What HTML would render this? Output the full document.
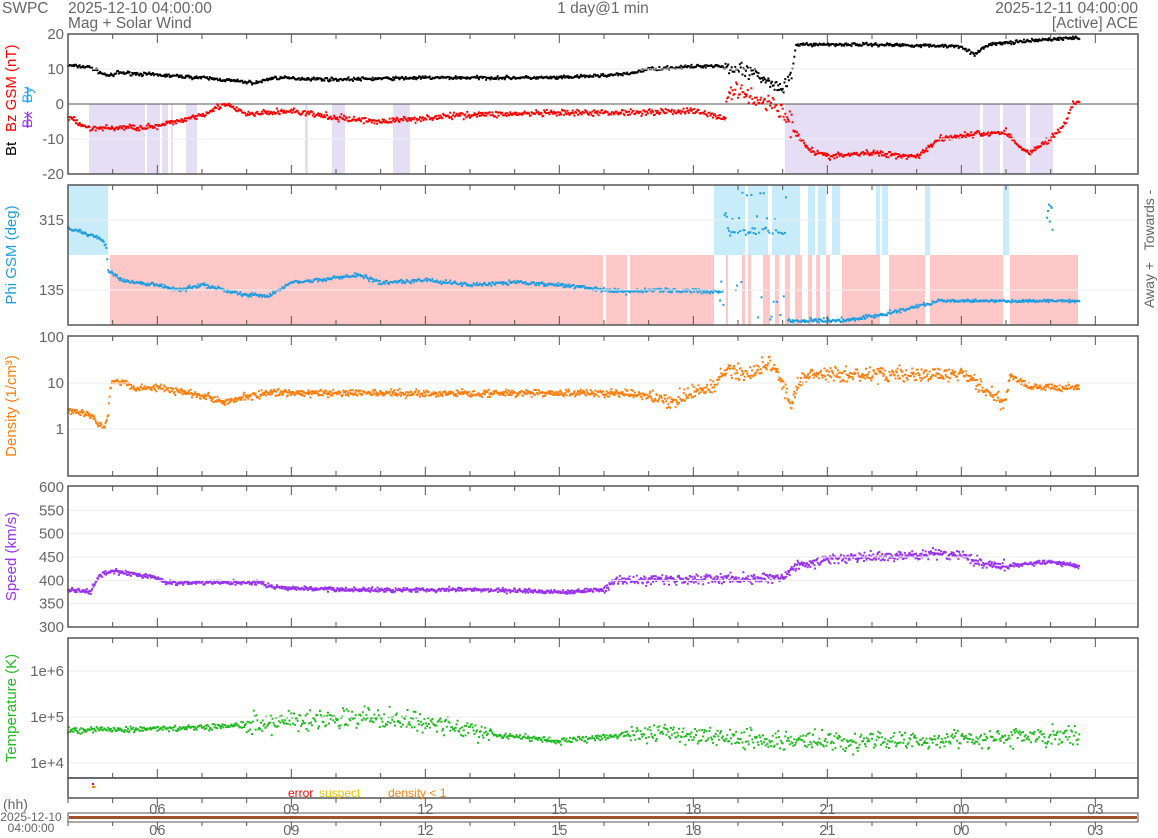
<!DOCTYPE html>
<html><head><meta charset="utf-8"><style>
html,body{margin:0;padding:0;background:#fff;width:1158px;height:838px;overflow:hidden}
svg{display:block;font-family:"Liberation Sans",sans-serif}
</style></head><body>
<svg id="s" width="1158" height="838" xmlns="http://www.w3.org/2000/svg">
<g font-size="15.5" fill="#666">
<text x="2" y="13">SWPC</text>
<text x="68" y="13">2025-12-10 04:00:00</text>
<text x="68" y="28">Mag + Solar Wind</text>
<text x="603" y="13" text-anchor="middle">1 day@1 min</text>
<text x="1138" y="13" text-anchor="end">2025-12-11 04:00:00</text>
<text x="1138" y="28" text-anchor="end">[Active] ACE</text>
</g>
<g id="bg"></g><g id="dat"></g><g id="ax"></g>
</svg>
<script>
var NS="http://www.w3.org/2000/svg",bg=document.getElementById('bg'),dat=document.getElementById('dat'),ax=document.getElementById('ax');
function el(p,t,a,txt){var e=document.createElementNS(NS,t);for(var k in a)e.setAttribute(k,a[k]);if(txt!=null)e.textContent=txt;p.appendChild(e);return e;}
var seed=7;function rnd(){seed=(seed*16807)%2147483647;return seed/2147483647;}
function gn(){return (rnd()+rnd()+rnd()-1.5)/1.5;}
var X0=68,X1=1138,PH=(1095-157)/21;
function hx(h){return X0+h*PH;}
function interp(k,h){for(var i=1;i<k.length;i++){if(h<=k[i][0]){var a=k[i-1],b=k[i];var t=(h-a[0])/(b[0]-a[0]);return a[1]+(b[1]-a[1])*t;}}return k[k.length-1][1];}
var HEND=22.65;
function rects(y0,y1,ints,col){ints.forEach(function(r){el(bg,'rect',{x:r[0],y:y0,width:r[1]-r[0],height:y1-y0,fill:col});});}
function pts(col,fn,step){var d='';for(var h=0;h<=HEND;h+=step){var y=fn(h);if(y==null)continue;var x=hx(h);d+='M'+(x-1).toFixed(1)+' '+(y-1).toFixed(1)+'h2v2h-2z';}el(dat,'path',{d:d,fill:col});}
function panel(y0,y1,grid,labels,ylab,ycol){
 grid.forEach(function(g){el(ax,'line',{x1:X0,x2:X1,y1:g,y2:g,stroke:'#eee'});});
 el(ax,'rect',{x:X0,y:y0,width:X1-X0,height:y1-y0,fill:'none',stroke:'#555','stroke-width':1.5});
 for(var h=0;h<=23;h++){var x=hx(h);var hr=(h+4)%24;var big=hr%3==0;var L=big?9:5;el(ax,'line',{x1:x,x2:x,y1:y0,y2:y0+L,stroke:'#555'});el(ax,'line',{x1:x,x2:x,y1:y1,y2:y1-L,stroke:'#555'});}
 labels.forEach(function(l){el(ax,'text',{x:64,y:l[1]+5,'text-anchor':'end','font-size':15,fill:'#666'},l[0]);});
 if(ylab){var cy=(y0+y1)/2;el(ax,'text',{x:16,y:cy,'text-anchor':'middle',transform:'rotate(-90 16 '+cy+')','font-size':15,fill:ycol},ylab);}
}
// Panel 1 Mag
rects(104,174,[[89,145],[147,160],[162,168],[171,173],[186,197],[305,308],[332,345],[393,410],[785,980],[983,1000],[1003,1026],[1030,1053]],'#e6def5');
el(bg,'line',{x1:X0,x2:X1,y1:104,y2:104,stroke:'#555'});
function my(v){return 104-v*3.5;}
var bt=[[0,11],[0.5,10.5],[0.8,8.5],[1,8],[1.1,9],[3,7.5],[4.2,6],[4.6,7.5],[6,7],[8,7.5],[11,7.5],[12.5,8.5],[13,10],[14.5,11],[14.7,10.5],[14.8,10],[15.5,8],[16,4],[16.2,8],[16.3,17],[18,17],[20,16.5],[20.3,14],[20.6,17],[22,18.5],[22.65,19]];
pts('#000',function(h){return my(interp(bt,h)+gn()*0.7+(h>14.7&&h<16.2?gn()*3:0));},0.02);
var bz=[[0,-4],[0.5,-7],[2,-6.5],[3,-3],[3.5,0],[4,-3],[5,-2],[6,-4],[7,-5],[9,-3],[12,-2.5],[14,-2],[14.7,-4],[14.8,4],[15.5,1],[16,-2],[16.3,-8],[16.6,-13],[17,-15],[18,-14],[19,-15],[19.5,-10],[20,-9],[21,-8],[21.2,-11],[21.5,-14],[22,-10],[22.3,-6],[22.5,0],[22.65,0.5]];
pts('#f00',function(h){return my(interp(bz,h)+gn()*1.3+(h>14.7&&h<16.3?gn()*4:0));},0.02);
panel(34,174,[69,139],[['20',34],['10',69],['0',104],['-10',139],['-20',174]]);
el(ax,'text',{x:16,y:156,transform:'rotate(-90 16 156)','font-size':15,fill:'#000'},'Bt');
el(ax,'text',{x:16,y:132,transform:'rotate(-90 16 132)','font-size':15,fill:'#f00'},'Bz GSM (nT)');
el(ax,'text',{x:32,y:128,transform:'rotate(-90 32 128)','font-size':14,fill:'#9933ff','text-decoration':'line-through'},'Bx');
el(ax,'text',{x:32,y:103,transform:'rotate(-90 32 103)','font-size':14,fill:'#22aaee','text-decoration':'line-through'},'By');
// Panel 2 Phi
rects(185,255,[[68,108],[714,745],[748,768],[772,800],[808,815],[818,826],[832,840],[876,880],[882,888],[925,930],[1003,1009]],'#c8ecfa');
rects(255,325,[[110,603],[606,627],[630,714],[726,728],[742,745],[748,751],[763,770],[775,779],[785,790],[795,802],[808,812],[816,820],[826,830],[842,880],[889,925],[930,1003],[1010,1078]],'#ffc8c8');
var ph=[[0,228],[0.7,238],[0.85,245],[0.9,270],[1.2,280],[2,285],[2.5,290],[3,285],[4,295],[4.5,296],[5,283],[6,278],[6.5,275],[7,283],[8,280],[9,285],[10,282],[11,285],[12.5,292],[13,290],[16,293],[18,296],[19,298],[20,298]];
pts('#1e9ee0',function(h){if(h>14.6&&h<16.1)return null;if(h>=16.1&&h<19.6)return interp([[16.1,321],[17.5,320],[18.5,312],[19.6,300]],h)+gn()*3;if(h>=19.6)return 301+gn()*2;return interp(ph,h)+gn()*3;},0.02);
pts('#1e9ee0',function(h){if(h<14.6||h>16.1)return null;var r=rnd();if(r<0.45)return 232+gn()*5;if(r<0.6)return 215+gn()*8;if(r<0.75)return 190+rnd()*10;return 280+rnd()*40;},0.025);
pts('#1e9ee0',function(h){if(h<21.9||h>22.05)return null;return 200+rnd()*40;},0.02);
panel(185,325,[220,290],[['315',220],['135',290]],'Phi GSM (deg)','#1e9ee0');
el(ax,'text',{x:1154,y:220,transform:'rotate(-90 1154 220)','text-anchor':'middle','font-size':14,fill:'#666'},'Towards -');
el(ax,'text',{x:1154,y:285,transform:'rotate(-90 1154 285)','text-anchor':'middle','font-size':14,fill:'#666'},'Away +');
// Panel 3 Density
function dy(n){return 429-46*Math.log10(n);}
var dn=[[0,2.5],[0.5,2],[0.8,1],[0.9,2],[1,12],[1.5,8],[2,8],[3.5,4],[4.5,6],[6,6],[10,6],[12.5,6],[13.5,4],[14,6],[14.5,8],[14.7,20],[15.3,15],[15.7,30],[16,8],[16.2,3],[16.5,15],[18,15],[20,15],[20.7,5],[21,4],[21.1,15],[21.5,8],[22.65,8]];
pts('#ff7f0e',function(h){var n=interp(dn,h)*Math.pow(10,gn()*((h>13&&h<21)?0.25:0.12));return dy(n);},0.015);
panel(336,476,[383,429],[['100',337],['10',383],['1',429]],'Density (1/cm³)','#ff7f0e');
// Panel 4 Speed
function sy(v){return 487+(600-v)*140/300;}
var sp=[[0,380],[0.5,375],[0.7,410],[1,420],[2,405],[2.2,395],[4.3,395],[4.6,385],[6,380],[9,380],[11,375],[12,380],[12.2,400],[16,405],[16.3,430],[17,445],[19,455],[20,455],[20.5,435],[21,430],[22,440],[22.65,430]];
pts('#9933ee',function(h){return sy(interp(sp,h)+gn()*((h>12&&h<21)?16:7));},0.015);
var sg=[];for(var v=350;v<600;v+=50)sg.push(sy(v));
panel(486,627,sg,[['600',487],['550',sy(550)],['500',sy(500)],['450',sy(450)],['400',sy(400)],['350',sy(350)],['300',627]],'Speed (km/s)','#9933ee');
// Panel 5 Temp
function ty(T){return 717-46*Math.log10(T/1e5);}
var tp=[[0,5e4],[3,6e4],[4,7e4],[5,8e4],[6,1e5],[8,8e4],[9,5e4],[9.5,4e4],[11,3e4],[12.5,4e4],[13,5e4],[14,4e4],[16,3e4],[19,3e4],[22.65,4e4]];
pts('#22bb22',function(h){return ty(interp(tp,h)*Math.pow(10,gn()*((h>4&&h<9.5)||h>12.5?0.32:0.1)));},0.02);
panel(638,778,[671,717,763],[['1e+6',671],['1e+5',717],['1e+4',763]],'Temperature (K)','#22bb22');
// status strip
el(ax,'rect',{x:68,y:778,width:1070,height:20,fill:'none',stroke:'#555','stroke-width':1.5});
el(ax,'rect',{x:92,y:783,width:2,height:2,fill:'#f00'});el(ax,'rect',{x:92,y:786,width:3,height:2,fill:'#ff7f0e'});
el(ax,'text',{x:288,y:797,'font-size':12,fill:'#f00'},'error');
el(ax,'text',{x:319,y:797,'font-size':12,fill:'#e6c200'},'suspect');
el(ax,'text',{x:388,y:797,'font-size':12,fill:'#ff7f0e'},'density < 1');
for(var h=0;h<=23;h++){var x=hx(h),hr=(h+4)%24,big=hr%3==0;el(ax,'line',{x1:x,x2:x,y1:798,y2:798+(big?9:5),stroke:'#555'});el(ax,'line',{x1:x,x2:x,y1:822,y2:822+(big?8:4),stroke:'#555'});
 if(big){var t=(hr<10?'0':'')+hr;el(ax,'text',{x:x,y:814,'text-anchor':'middle','font-size':14.5,fill:'#666'},t);el(ax,'text',{x:x,y:835,'text-anchor':'middle','font-size':14.5,fill:'#666'},t);}}
el(ax,'text',{x:3,y:809,'font-size':14,fill:'#666'},'(hh)');
el(ax,'text',{x:31,y:821,'text-anchor':'middle','font-size':12,fill:'#666'},'2025-12-10');
el(ax,'text',{x:31,y:832,'text-anchor':'middle','font-size':12,fill:'#666'},'04:00:00');
el(ax,'rect',{x:68,y:813,width:1070,height:9,fill:'none',stroke:'#555'});
el(ax,'rect',{x:69,y:816,width:1068,height:3,fill:'#a0522d'});
</script>
</body></html>
